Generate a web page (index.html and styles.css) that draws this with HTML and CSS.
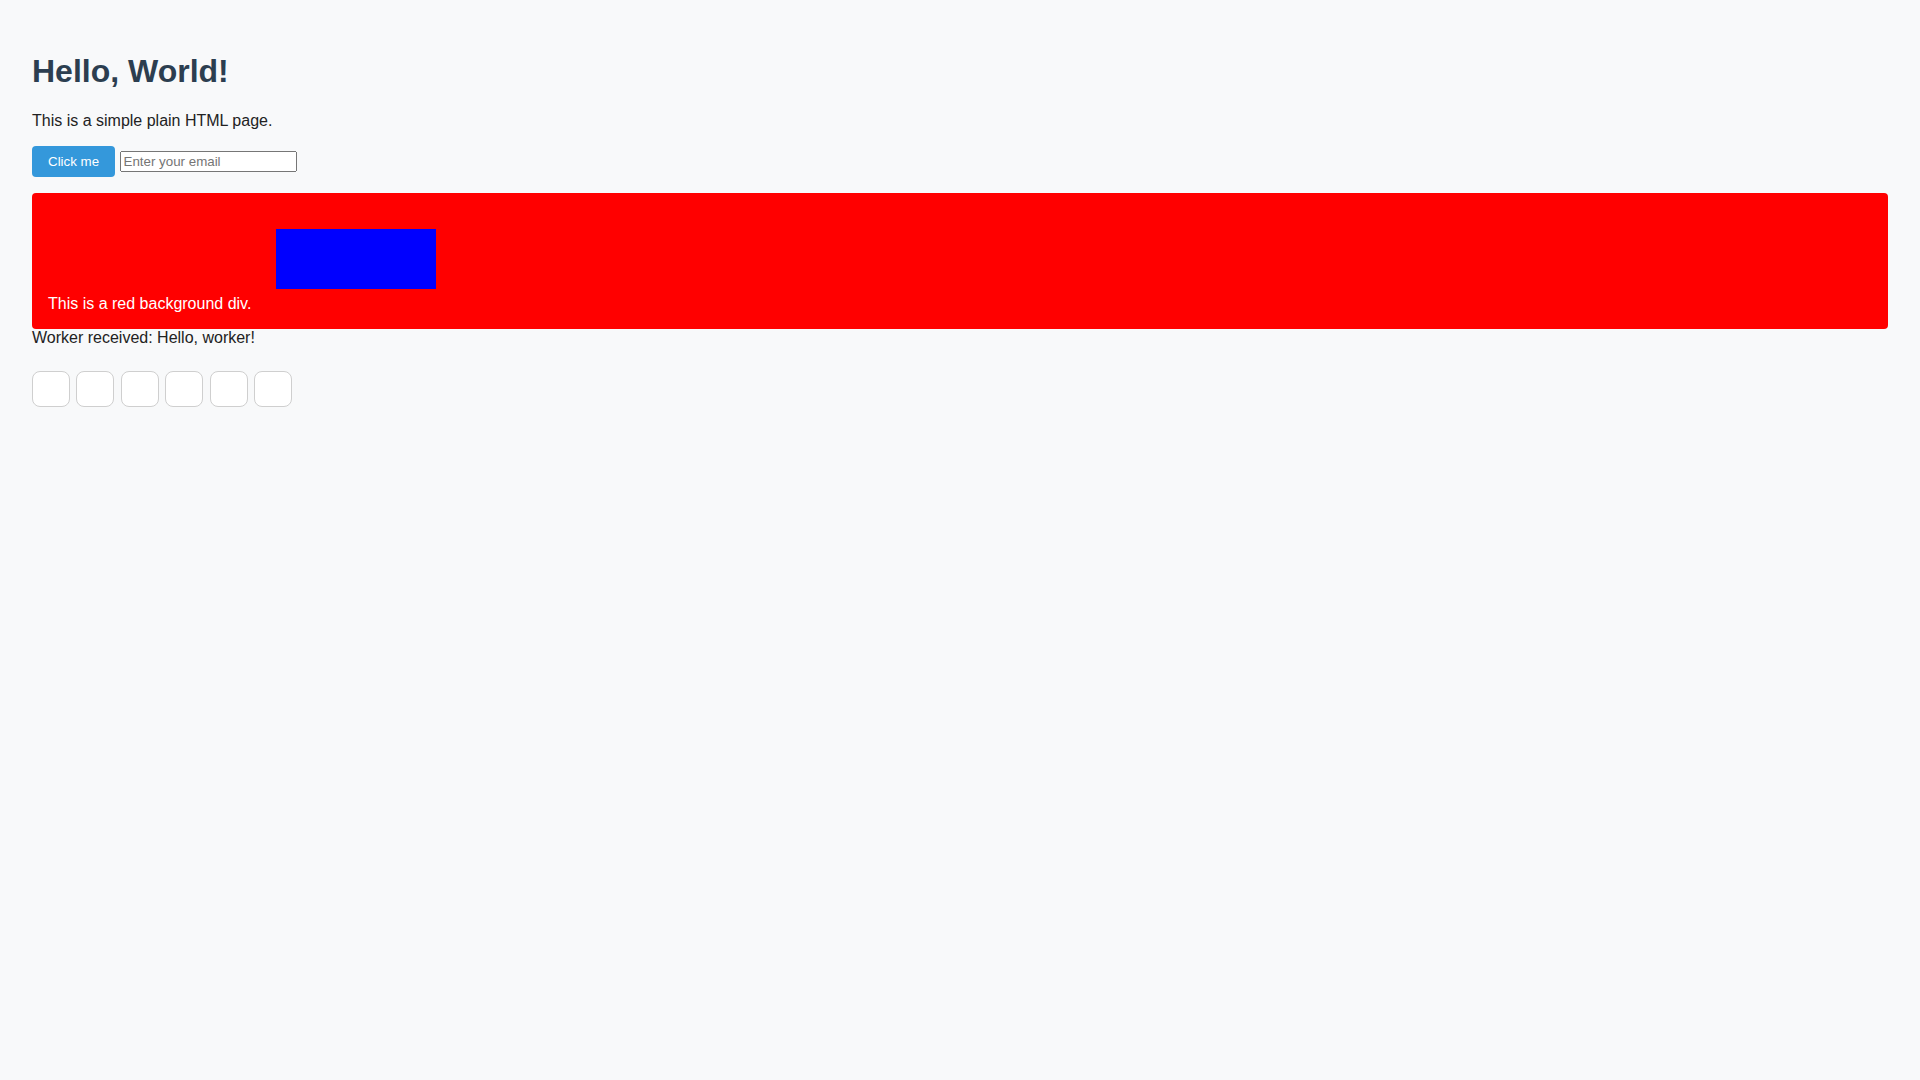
FILE: index.html
```html
<!DOCTYPE html>
<html lang="en">
<head>
<meta charset="utf-8">
<title>Hello, World!</title>
<link rel="stylesheet" href="styles.css">
</head>
<body>
<h1 class="title">Hello, World!</h1>
<p class="intro">This is a simple plain HTML page.</p>
<div class="controls"><button class="btn">Click me</button> <input class="email" type="email" placeholder="Enter your email"></div>
<div class="red-bg">
  <div class="blue-box"></div>
  <div class="red-text">This is a red background div.</div>
</div>
<div class="worker">Worker received: Hello, worker!</div>
<div class="tiles">
  <div class="tile"></div>
  <div class="tile"></div>
  <div class="tile"></div>
  <div class="tile"></div>
  <div class="tile"></div>
  <div class="tile"></div>
</div>
</body>
</html>
```

FILE: styles.css
```css
html, body {
  background: #f8f9fa;
}
body {
  margin: 0;
  padding: 32px;
  font-family: "Liberation Sans", Arial, sans-serif;
  font-size: 16px;
  color: #222;
}
.title {
  font-size: 32px;
  font-weight: bold;
  color: #2c3e50;
  margin: 21.44px 0;
}
.intro {
  margin: 16px 0;
}
.btn {
  font-family: "Liberation Sans", Arial, sans-serif;
  font-size: 13.333px;
  background: #3498db;
  color: #fff;
  border: none;
  border-radius: 4px;
  padding: 8px 16px;
  margin: 0;
}
.email {
  font-family: "Liberation Sans", Arial, sans-serif;
  font-size: 13.333px;
  margin: 0;
  width: 177px;
  box-sizing: border-box;
}
.red-bg {
  margin-top: 16px;
  background: #ff0000;
  color: #fff;
  padding: 16px;
  border-radius: 4px;
}
.blue-box {
  width: 160px;
  height: 60px;
  background: #0000ff;
  margin: 20px 0 6.6px 228px;
}
.tiles {
  display: flex;
  gap: 6.4px;
  margin-top: 24px;
}
.tile {
  width: 38px;
  height: 35.4px;
  box-sizing: border-box;
  background: #fff;
  border: 1px solid #cfcfcf;
  border-radius: 8px;
}
```
